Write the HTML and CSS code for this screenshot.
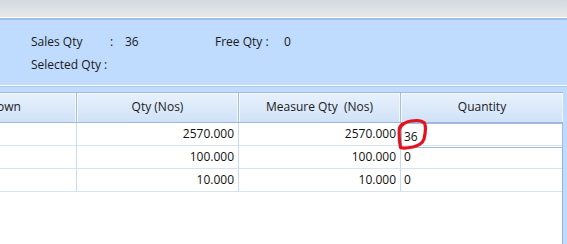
FILE: index.html
```html
<!DOCTYPE html>
<html>
<head>
<meta charset="utf-8">
<link rel="stylesheet" href="styles.css">
</head>
<body>
<div class="screen">
  <div class="topbar"></div>
  <div class="summary">
    <div class="sum-row">
      <span class="lbl">Sales Qty</span><span class="colon">:</span><span class="val">36</span><span class="lbl2">Free Qty :</span><span>0</span>
    </div>
    <div class="sum-row">
      <span>Selected Qty :</span>
    </div>
  </div>
  <div class="grid-area">
    <div class="grid">
      <div class="row head">
        <div class="cell">Breakdown</div>
        <div class="cell">Qty (Nos)</div>
        <div class="cell">Measure Qty&nbsp; (Nos)</div>
        <div class="cell">Quantity</div>
      </div>
      <div class="row">
        <div class="cell"></div>
        <div class="cell num">2570.000</div>
        <div class="cell num">2570.000</div>
        <div class="cell edit">36</div>
      </div>
      <div class="row">
        <div class="cell"></div>
        <div class="cell num">100.000</div>
        <div class="cell num">100.000</div>
        <div class="cell txt">0</div>
      </div>
      <div class="row">
        <div class="cell"></div>
        <div class="cell num">10.000</div>
        <div class="cell num">10.000</div>
        <div class="cell txt">0</div>
      </div>
      <div class="filler"></div>
    </div>
  </div>
  <svg class="mark" width="34" height="34" viewBox="0 0 34 34">
    <path d="M4 10 C6 6 9 4 15 3 C21 2 26 2.5 28.5 5 C30 9 29.5 15 28 21 C26.5 25.5 23 27.5 17 29 C12 30 7 30.5 4.5 29.5 C3.5 25 3 18 3.2 12 C3.3 9 4.5 7.5 6.5 6" fill="none" stroke="#e5141c" stroke-width="3.2" stroke-linecap="round" stroke-linejoin="round"/>
  </svg>
</div>
</body>
</html>
```
FILE: styles.css
```css
* { box-sizing: border-box; }
html, body { margin: 0; padding: 0; }
body {
  width: 567px;
  height: 244px;
  overflow: hidden;
  font-family: "Open Sans", "Noto Sans", sans-serif;
  font-size: 12px;
  color: #111;
  background: #bfdbfe;
}
.screen {
  position: relative;
  width: 567px;
  height: 244px;
  overflow: hidden;
}
.topbar {
  height: 17px;
  background: linear-gradient(#d4d9e1, #e7e8ea);
}
.summary {
  border-top: 1px solid #ffffff;
  box-shadow: inset 0 1px 0 #9ebfe9, inset 0 2px 0 #9ebfe9;
  background: #bfdbfe;
  padding: 12px 0 9px 31px;
  border-bottom: 1px solid #ffffff;
}
.sum-row {
  display: flex;
  height: 23px;
  line-height: 23px;
  color: #1a1a1a;
}
.lbl { width: 79px; }
.colon { width: 15px; }
.val { width: 90px; }
.lbl2 { width: 69px; }
.grid-area {
  border-top: 1px solid #a9c8f0;
  padding: 5px 4px 0 0;
  background: #bfdbfe;
}
.grid {
  margin-left: -98px;
  width: 661px;
  height: 160px;
  background: #ffffff;
  border-right: 1px solid #8fb1de;
}
.row {
  display: grid;
  grid-template-columns: 175px 162px 162px 162px;
  height: 23px;
  border-bottom: 1px solid #d5e3f5;
}
.row .cell {
  border-right: 1px solid #c8dbf3;
  line-height: 22px;
  padding: 0 4px;
  white-space: nowrap;
}
.row .cell:last-child { border-right: 0; }
.row.head {
  height: 31px;
  border-top: 1px solid #9fbbe2;
  border-bottom: 1px solid #9cb8df;
  background: linear-gradient(#e8f1fc, #d0e2f8);
}
.row.head .cell {
  text-align: center;
  line-height: 28px;
  border-right: 1px solid #a3bfe4;
  box-shadow: inset 1px 1px 0 #f6faff, inset -1px 0 0 #f2f7fe;
  color: #1a1a1a;
}
.row.head .cell:last-child { border-right: 0; }
.num { text-align: right; }
.txt { text-align: left; padding-left: 3px !important; }
.edit {
  outline: 1px solid #9dbbe3;
  outline-offset: -1px;
  padding-top: 3px !important;
  padding-left: 3px !important;
}
.mark {
  position: absolute;
  left: 396px;
  top: 118px;
}
```
